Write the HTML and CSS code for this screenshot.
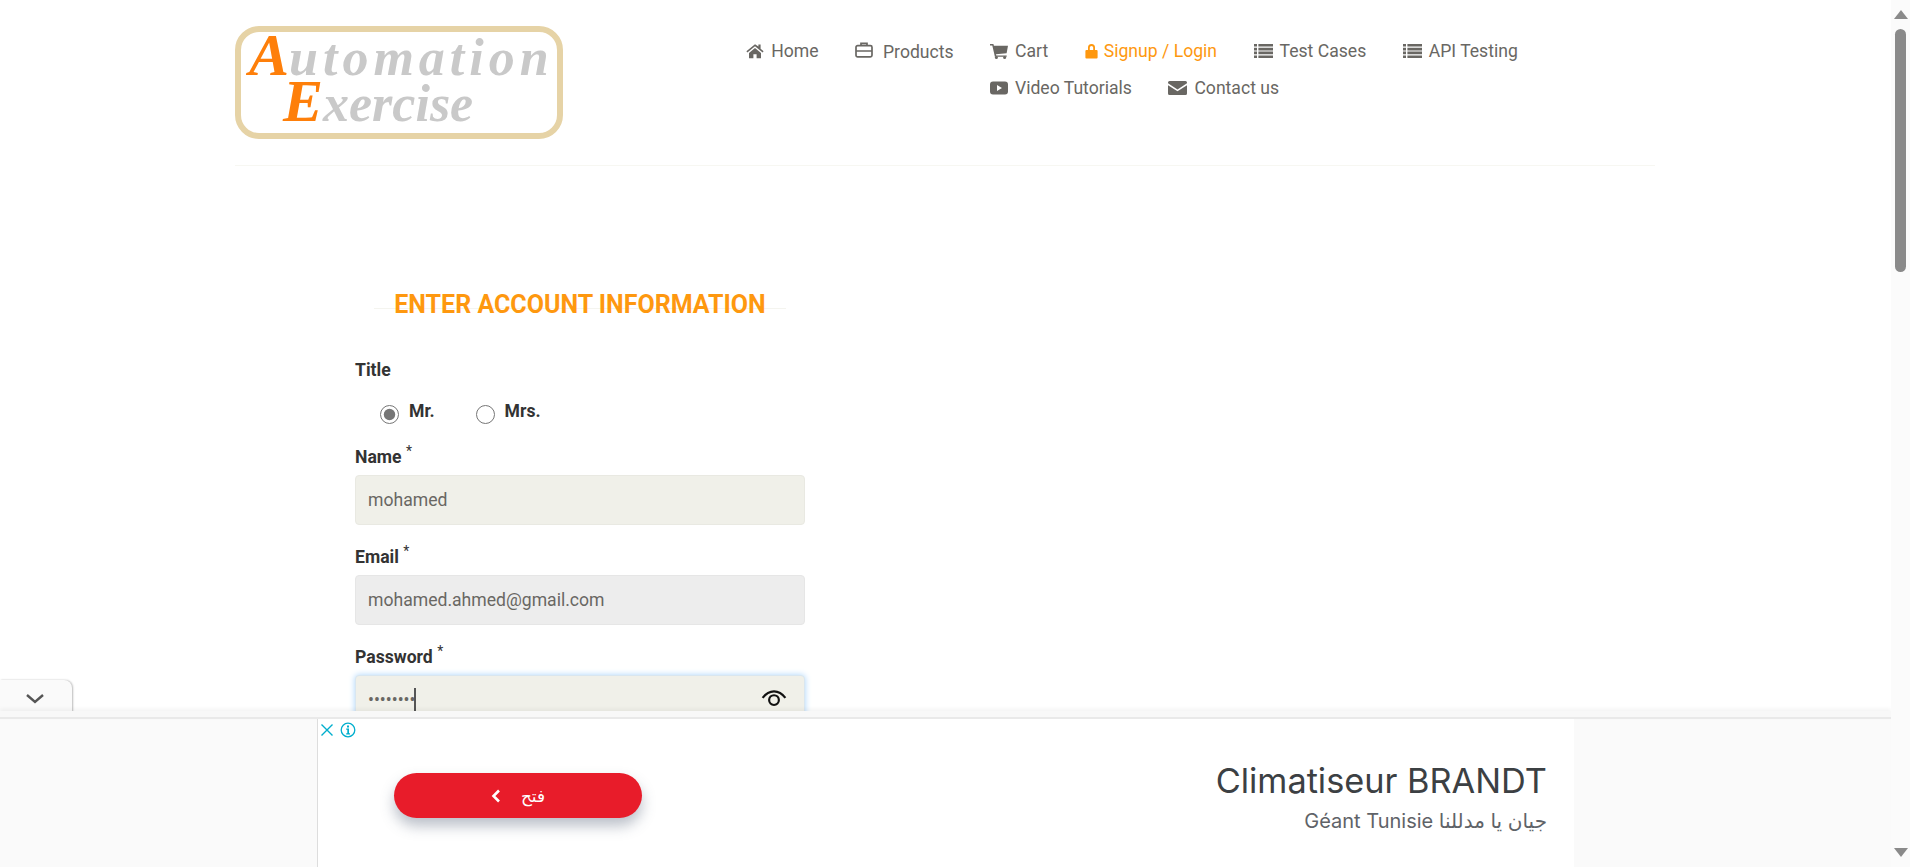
FILE: index.html
```html
<!DOCTYPE html>
<html lang="en">
<head>
	<meta charset="UTF-8">
	<title>Automation Exercise - Signup</title>
	<link rel="stylesheet" href="styles.css">
</head>
<body>
<div class="window">
	<div class="viewport">
		<div class="container">
			<header class="header">
				<div class="logo-col">
					<a class="logo" href="#">
						<span class="logo-line"><b>A</b>utomation</span>
						<span class="logo-line logo-line-2"><b>E</b>xercise</span>
					</a>
				</div>
				<ul class="nav">
					<li><a href="#"><svg class="ico" viewBox="0 0 18 16"><path fill="currentColor" d="M9 1.2 0.4 8.3l1 1.2L9 3.2l7.6 6.3 1-1.2-3-2.5V1.6h-2.2v1.9zM3 10v5.2h4.4v-4h3.2v4H15V10L9 5z"/></svg>Home</a></li>
					<li class="nav-low"><a href="#"><svg class="ico ico-up" viewBox="0 0 18 16"><path fill="none" stroke="currentColor" stroke-width="1.7" d="M2.6 3.6h12.8a1.6 1.6 0 0 1 1.6 1.6v8a1.6 1.6 0 0 1-1.6 1.6H2.6A1.6 1.6 0 0 1 1 13.2v-8a1.6 1.6 0 0 1 1.6-1.6zM1 9h16M6 3.6V1.4h6v2.2"/></svg>Products</a></li>
					<li><a href="#"><svg class="ico" viewBox="0 0 18 16"><path fill="currentColor" d="M0 1h3.4l.5 1.8H18l-1.4 7.4-10.6 1 .3 1.2h10.4v1.4H4.9L2.3 2.4H0z"/><circle fill="currentColor" cx="6.4" cy="14.4" r="1.5"/><circle fill="currentColor" cx="14.6" cy="14.4" r="1.5"/></svg>Cart</a></li>
					<li class="active"><a href="#"><svg class="ico ico-lock" viewBox="0 0 13 16"><path fill="currentColor" d="M3 7V4.6a3.5 3.5 0 0 1 7 0V7h1.6a1 1 0 0 1 1 1v6.4a1 1 0 0 1-1 1H1.4a1 1 0 0 1-1-1V8a1 1 0 0 1 1-1zm1.8 0h3.4V4.6a1.7 1.7 0 0 0-3.4 0z"/></svg>Signup / Login</a></li>
					<li><a href="#"><svg class="ico ico-list" viewBox="0 0 19 16"><path fill="currentColor" d="M0 1h3v2.6H0zM4.4 1H19v2.6H4.4zM0 4.8h3v2.6H0zM4.4 4.8H19v2.6H4.4zM0 8.6h3v2.6H0zM4.4 8.6H19v2.6H4.4zM0 12.4h3V15H0zM4.4 12.4H19V15H4.4z"/></svg>Test Cases</a></li>
					<li><a href="#"><svg class="ico ico-list" viewBox="0 0 19 16"><path fill="currentColor" d="M0 1h3v2.6H0zM4.4 1H19v2.6H4.4zM0 4.8h3v2.6H0zM4.4 4.8H19v2.6H4.4zM0 8.6h3v2.6H0zM4.4 8.6H19v2.6H4.4zM0 12.4h3V15H0zM4.4 12.4H19V15H4.4z"/></svg>API Testing</a></li>
					<li class="nav-video"><a href="#"><svg class="ico" viewBox="0 0 18 16"><path fill="currentColor" fill-rule="evenodd" d="M3 1.5h12a3 3 0 0 1 3 3v7a3 3 0 0 1-3 3H3a3 3 0 0 1-3-3v-7a3 3 0 0 1 3-3zM7 5v6l5-3z"/></svg>Video Tutorials</a></li>
					<li><a href="#"><svg class="ico ico-env" viewBox="0 0 19 16"><path fill="currentColor" d="M1.5 1h16A1.5 1.5 0 0 1 19 2.5v.8L9.5 9.4 0 3.3v-.8A1.500 1.500 0 0 1 1.500 1zM0 5.300l9.500 6 9.500-6v8.200a1.500 1.500 0 0 1-1.500 1.500h-16A1.500 1.500 0 0 1 0 13.500z"/></svg>Contact us</a></li>
				</ul>
			</header>

			<section class="signup">
				<h2 class="title"><span>ENTER ACCOUNT INFORMATION</span></h2>
				<form>
					<div class="label label-title">Title</div>
					<div class="radios">
						<label class="radio"><input type="radio" name="title" checked><span>Mr.</span></label>
						<label class="radio"><input type="radio" name="title"><span>Mrs.</span></label>
					</div>
					<div class="field">
						<label class="label">Name <sup>*</sup></label>
						<input class="input" type="text" value="mohamed">
					</div>
					<div class="field">
						<label class="label">Email <sup>*</sup></label>
						<input class="input input-off" type="text" value="mohamed.ahmed@gmail.com">
					</div>
					<div class="field field-pass">
						<label class="label">Password <sup>*</sup></label>
						<div class="pass-wrap">
							<input class="input input-focus" type="password" value="password">
							<i class="caret"></i>
							<svg class="eye" viewBox="0 0 24 24"><path fill="none" stroke="#111" stroke-width="2" d="M1.500 11C4.500 7 8 5 12 5s7.500 2 10.500 6"/><circle fill="none" stroke="#111" stroke-width="2" cx="12" cy="13" r="4.500"/></svg>
						</div>
					</div>
				</form>
			</section>
		</div>

		<div class="ad-tab"><svg viewBox="0 0 18 10"><path fill="none" stroke="#555" stroke-width="2.400" d="M1 1l8 7 8-7"/></svg></div>
		<aside class="ad">
			<div class="ad-top"></div>
			<div class="ad-body">
				<div class="ad-inner">
					<div class="ad-icons">
						<svg class="ad-x" viewBox="0 0 12 12"><path fill="none" stroke="#00aecd" stroke-width="1.400" d="M.5.5l11 11M11.500.5l-11 11"/></svg>
						<svg class="ad-i" viewBox="0 0 16 16"><circle fill="none" stroke="#00aecd" stroke-width="1.300" cx="8" cy="8" r="6.800"/><path fill="#00aecd" d="M7 3.600h2v1.800H7zM6.200 6.600h2.800v4.600h1v1.200H6.200v-1.200h1.100V7.800H6.200z"/></svg>
					</div>
					<a class="ad-btn" href="#" dir="rtl"><span>فتح</span><svg viewBox="0 0 10 14"><path fill="none" stroke="#fff" stroke-width="2.600" d="M8 1.500 2.500 7 8 12.500"/></svg></a>
					<div class="ad-text">
						<div class="ad-head">Climatiseur BRANDT</div>
						<div class="ad-sub" dir="rtl">جيان يا مدللنا Géant Tunisie</div>
					</div>
				</div>
			</div>
		</aside>
	</div>

	<div class="scrollbar">
		<svg class="arrow" viewBox="0 0 14 10"><path fill="#8a8a8a" d="M7 0l7 9H0z"/></svg>
		<div class="thumb"></div>
		<svg class="arrow arrow-down" viewBox="0 0 14 10"><path fill="#8a8a8a" d="M0 1h14l-7 9z"/></svg>
	</div>
</div>
</body>
</html>
```

FILE: styles.css
```css
*{
	margin:0;
	padding:0;
	box-sizing:border-box;
}

html, body{
	height:100%;
	overflow:hidden;
	background:#fff;
}

body{
	font-family:Roboto, "Noto Sans", sans-serif;
	color:#696763;
}

a{
	color:inherit;
	text-decoration:none;
}

.window{
	display:flex;
	height:867px;
}

.viewport{
	position:relative;
	flex:1;
	min-width:0;
	overflow:hidden;
}

.container{
	width:1420px;
	margin-left:235px;
}

/* header */
.header{
	display:flex;
	height:166px;
	padding-top:26px;
	border-bottom:1px solid #f7f7f2;
}

.logo-col{
	width:477px;
}

.logo{
	display:block;
	width:328px;
	height:113px;
	padding:0 0 0 8px;
	border:6px solid #e6d3a6;
	border-radius:24px;
	font-family:"Liberation Serif", serif;
	font-style:italic;
	font-weight:700;
	font-size:52px;
	line-height:46px;
	letter-spacing:5px;
	color:#c9c9c9;
}

.logo b{
	color:#fe7f0a;
	font-size:60px;
	letter-spacing:0;
}

.logo-line{
	display:block;
	height:46px;
	white-space:nowrap;
}

.logo-line-2{
	padding-left:34px;
	letter-spacing:0;
}

.nav{
	display:flex;
	flex-wrap:wrap;
	justify-content:center;
	align-content:flex-start;
	gap:0 36.5px;
	width:840px;
	margin-top:7px;
	list-style:none;
	font-size:17.6px;
	line-height:37px;
}

.nav li{
	height:37px;
}

.nav a{
	display:flex;
	align-items:center;
}

.nav .nav-low a{
	padding-top:1px;
}

.nav .nav-video{
	margin-left:5px;
}

.nav .active{
	color:#fe980f;
}

.ico{
	width:18px;
	height:16px;
	margin:-2px 7px 0 0;
	color:#696763;
	flex:none;
}

.ico-up{
	margin-top:-5px;
	margin-right:10px;
}

.ico-lock{
	width:13px;
	margin-right:6px;
	color:#fe980f;
}

.ico-list, .ico-env{
	width:19px;
}

/* form */
.signup{
	width:450px;
	margin-left:120px;
}

.title{
	width:412px;
	margin:122px 0 0 19px;
	font-size:25px;
	line-height:34px;
	font-weight:700;
	color:#fe980f;
	text-align:center;
	background:linear-gradient(#f4f4ef, #f4f4ef) 0 20px / 100% 1px no-repeat;
}

.label{
	display:block;
	font-size:17.6px;
	line-height:22px;
	font-weight:700;
	color:#333;
}

.label sup{
	font-size:14px;
	font-weight:400;
	line-height:0;
}

.label-title{
	margin-top:37px;
}

.radios{
	display:flex;
	gap:41px;
	height:45px;
	margin:20px 0 0 25px;
}

.radio{
	display:flex;
	font-size:17.6px;
	line-height:20px;
	font-weight:700;
	color:#333;
}

.radio input{
	width:19px;
	height:19px;
	margin:4px 10px 0 0;
	accent-color:#767676;
}

.field{
	margin-bottom:21px;
}

.field .label{
	margin-bottom:7px;
}

.input{
	display:block;
	width:450px;
	height:50px;
	padding:0 12px;
	border:1px solid #e9e9e2;
	border-radius:4px;
	background:#f0f0e9;
	font-family:Roboto, sans-serif;
	font-size:17.6px;
	color:#696763;
	outline:none;
}

.input-off{
	background:#ededed;
	border-color:#e6e6e6;
}

.input-focus{
	border-color:#d9e6ef;
	box-shadow:0 0 6px #a9d4fb;
}

.pass-wrap{
	position:relative;
}

.caret{
	position:absolute;
	left:59px;
	top:13px;
	width:1.500px;
	height:24px;
	background:#555;
}

.eye{
	position:absolute;
	right:18px;
	top:11px;
	width:26px;
	height:26px;
}

/* bottom ad */
.ad-tab{
	position:absolute;
	left:0;
	top:680px;
	width:72px;
	height:32px;
	background:#fafafa;
	border-top-right-radius:8px;
	box-shadow:1px 0 2px #bbb;
}

.ad-tab svg{
	display:block;
	width:18px;
	height:10px;
	margin:14px 0 0 26px;
}

.ad{
	position:absolute;
	left:0;
	right:0;
	top:711px;
	height:156px;
	display:flex;
	flex-direction:column;
	background:#fafafa;
}

.ad-top{
	height:8px;
	background:#f8f8f8;
	border-bottom:2px solid #e9e9e9;
	box-shadow:0 -2px 4px rgba(0,0,0,.05);
}

.ad-body{
	flex:1;
	padding-left:317px;
}

.ad-inner{
	display:flex;
	align-items:flex-start;
	position:relative;
	width:1257px;
	height:100%;
	background:#fff;
	border-left:1px solid #ddd;
}

.ad-icons{
	position:absolute;
	left:3px;
	top:3px;
	display:flex;
	align-items:center;
	gap:7px;
}

.ad-x{
	width:12px;
	height:12px;
}

.ad-i{
	width:16px;
	height:16px;
}

.ad-btn{
	display:flex;
	align-items:center;
	justify-content:center;
	gap:20px;
	width:248px;
	height:45px;
	margin:54px 0 0 76px;
	border-radius:23px;
	background:#e81c2a;
	box-shadow:0 8px 14px rgba(60,75,100,.35);
	color:#fff;
	font-family:"DejaVu Sans", sans-serif;
	font-size:17px;
}

.ad-btn svg{
	width:10px;
	height:14px;
}

.ad-text{
	margin:40px 0 0 auto;
	padding-right:27px;
	text-align:right;
}

.ad-head{
	font-family:Inter, sans-serif;
	font-size:34.3px;
	line-height:44px;
	color:#3c4043;
}

.ad-sub{
	margin-top:6px;
	font-family:Inter, "DejaVu Sans", sans-serif;
	font-size:20px;
	line-height:24px;
	color:#5f6368;
}

/* scrollbar */
.scrollbar{
	position:relative;
	display:flex;
	flex-direction:column;
	align-items:center;
	width:19px;
	height:867px;
	padding-top:10px;
	background:#fbfbfb;
}

.arrow{
	width:14px;
	height:10px;
	flex:none;
}

.arrow-down{
	margin-top:auto;
	margin-bottom:10px;
}

.thumb{
	width:11px;
	height:243px;
	margin-top:9px;
	border-radius:6px;
	background:#8a8a8a;
}
```
